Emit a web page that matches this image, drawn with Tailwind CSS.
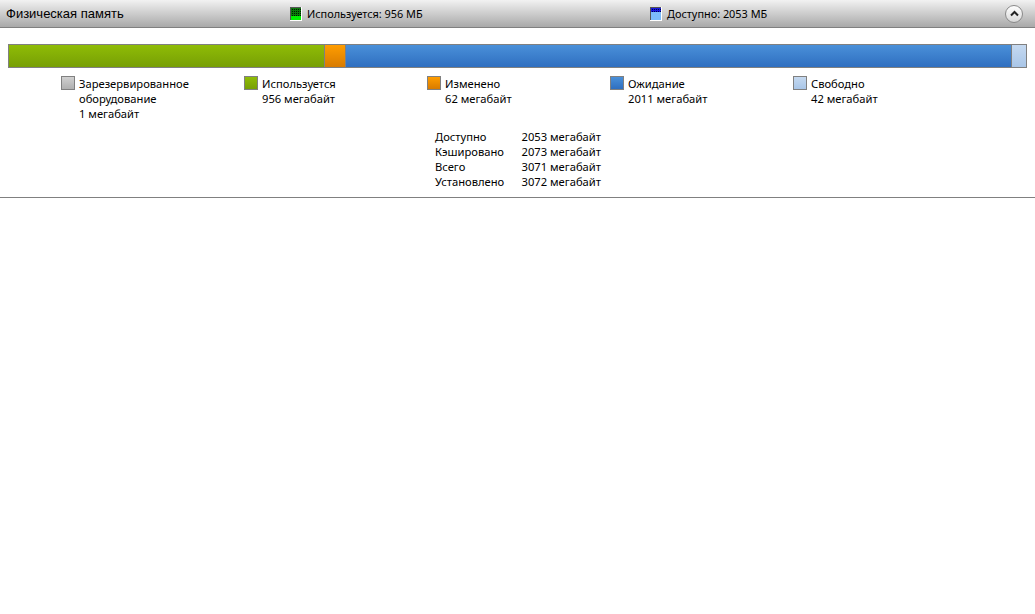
<!DOCTYPE html>
<html lang="ru">

<head>
  <meta charset="UTF-8" />
  <title>Физическая память</title>
  <script src="https://cdn.jsdelivr.net/npm/@tailwindcss/browser@4"></script>
</head>

<body class="bg-white h-[614px] overflow-hidden font-['Noto_Sans','Open_Sans',sans-serif] text-[11.2px] leading-[15px] text-black">

  <!-- header -->
  <div class="flex items-center h-[28px] border-b border-[#808080] bg-gradient-to-b from-[#f2f2f2] to-[#a9a9a9]">
    <div class="w-[290px] pl-[6px] font-['Liberation_Sans',sans-serif] text-[13px] pb-[1px]">Физическая память</div>
    <div class="w-[360px] flex items-center gap-[5px] text-[10.9px]">
      <svg width="12" height="14" viewBox="0 0 12 14" shape-rendering="crispEdges">
        <rect width="12" height="14" fill="#fff" />
        <rect width="11" height="13" fill="#555" />
        <rect x="1" y="1" width="10" height="12" fill="#00f000" />
        <rect x="1" y="1" width="10" height="8" fill="#0a7a0a" />
        <path d="M2 2h1v1H2zM4 2h1v1H4zM6 2h1v1H6zM8 2h1v1H8zM10 2h1v1h-1zM2 4h1v1H2zM4 4h1v1H4zM6 4h1v1H6zM8 4h1v1H8zM10 4h1v1h-1zM2 6h1v1H2zM4 6h1v1H4zM6 6h1v1H6zM8 6h1v1H8zM10 6h1v1h-1zM2 8h1v1H2zM4 8h1v1H4zM6 8h1v1H6zM8 8h1v1H8zM10 8h1v1h-1z" fill="#001a00" />
      </svg>
      <span>Используется: 956 МБ</span>
    </div>
    <div class="flex items-center gap-[5px] text-[10.9px]">
      <svg width="12" height="14" viewBox="0 0 12 14" shape-rendering="crispEdges">
        <rect width="12" height="14" fill="#fff" />
        <rect width="11" height="13" fill="#555" />
        <rect x="1" y="1" width="10" height="12" fill="#7cbcfb" />
        <rect x="1" y="1" width="10" height="4" fill="#1a1ae0" />
        <path d="M2 2h1v1H2zM4 2h1v1H4zM6 2h1v1H6zM8 2h1v1H8zM10 2h1v1h-1zM2 4h1v1H2zM4 4h1v1H4zM6 4h1v1H6zM8 4h1v1H8zM10 4h1v1h-1z" fill="#00004a" />
      </svg>
      <span>Доступно: 2053 МБ</span>
    </div>
    <button class="ml-auto mr-[12px] w-[18px] h-[18px] rounded-full border border-[#8a8a8a] bg-gradient-to-b from-white to-[#d8d8d8] flex items-center justify-center">
      <svg width="9" height="7" viewBox="0 0 9 7" fill="none" stroke="#222" stroke-width="2"><path d="M1 5.5 4.5 2 8 5.5" /></svg>
    </button>
  </div>

  <!-- bar -->
  <div class="flex h-[24px] mt-[16px] mx-[8px] border border-[#808080]">
    <div class="w-[316px] border-r border-[#808080] bg-gradient-to-b from-[#8fbc06] to-[#779f05]"></div>
    <div class="w-[21px] border-r border-[#808080] bg-gradient-to-b from-[#ff9d00] to-[#d87b00]"></div>
    <div class="flex-1 border-r border-[#808080] bg-gradient-to-b from-[#4a90d9] to-[#2f6fc0]"></div>
    <div class="w-[14px] bg-gradient-to-b from-[#c5d9f0] to-[#a9c6e8]"></div>
  </div>

  <!-- legend -->
  <div class="flex mt-[8px] pl-[61px]">
    <div class="w-[183px] flex gap-[4px]">
      <span class="w-[14px] h-[14px] border border-[#808080] bg-gradient-to-b from-[#d0d0d0] to-[#b0b0b0]"></span>
      <div class="-mt-[0.5px]">Зарезервированное<br>оборудование<br>1 мегабайт</div>
    </div>
    <div class="w-[183px] flex gap-[4px]">
      <span class="w-[14px] h-[14px] border border-[#808080] bg-gradient-to-b from-[#8fbc06] to-[#779f05]"></span>
      <div class="-mt-[0.5px]">Используется<br>956 мегабайт</div>
    </div>
    <div class="w-[183px] flex gap-[4px]">
      <span class="w-[14px] h-[14px] border border-[#808080] bg-gradient-to-b from-[#ff9d00] to-[#d87b00]"></span>
      <div class="-mt-[0.5px]">Изменено<br>62 мегабайт</div>
    </div>
    <div class="w-[183px] flex gap-[4px]">
      <span class="w-[14px] h-[14px] border border-[#808080] bg-gradient-to-b from-[#4a90d9] to-[#2f6fc0]"></span>
      <div class="-mt-[0.5px]">Ожидание<br>2011 мегабайт</div>
    </div>
    <div class="w-[183px] flex gap-[4px]">
      <span class="w-[14px] h-[14px] border border-[#808080] bg-gradient-to-b from-[#c5d9f0] to-[#a9c6e8]"></span>
      <div class="-mt-[0.5px]">Свободно<br>42 мегабайт</div>
    </div>
  </div>

  <!-- totals -->
  <div class="grid grid-cols-[86.5px_auto] justify-start pl-[435px] pt-[8px] pb-[8px] border-b border-[#808080]">
    <div>Доступно</div><div>2053 мегабайт</div>
    <div>Кэшировано</div><div>2073 мегабайт</div>
    <div>Всего</div><div>3071 мегабайт</div>
    <div>Установлено</div><div>3072 мегабайт</div>
  </div>

</body>

</html>
